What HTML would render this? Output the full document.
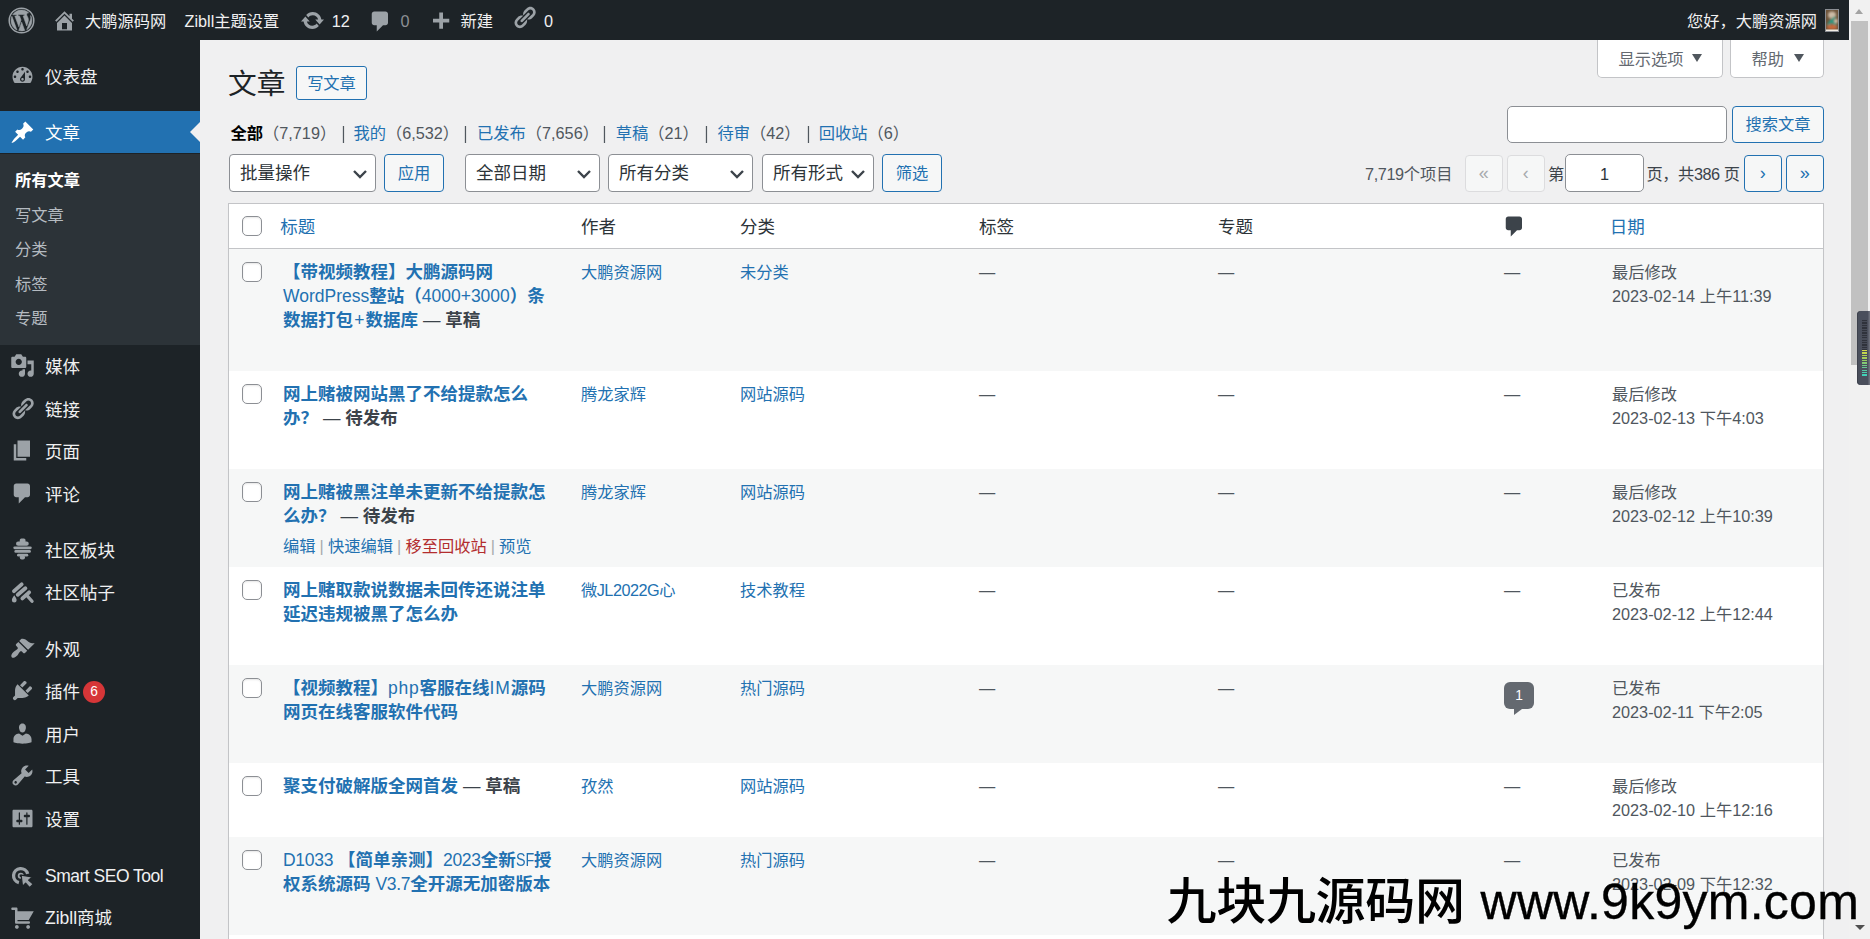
<!DOCTYPE html>
<html lang="zh-CN">
<head>
<meta charset="utf-8">
<title>文章 ‹ 大鹏源码网 — WordPress</title>
<style>
*{box-sizing:border-box;margin:0;padding:0}
html,body{width:1870px;height:939px;overflow:hidden}
body{background:#f0f0f1;color:#3c434a;font-family:"Liberation Sans","Noto Sans CJK SC",sans-serif;font-size:16.25px;line-height:1.4;position:relative}
a{color:#2271b1;text-decoration:none}
svg{display:block}
/* admin bar */
#bar{position:absolute;left:0;top:0;width:1849px;height:40px;background:#1d2327;color:#f0f0f1;z-index:20}
#bar .it{position:absolute;top:0;height:43px;line-height:43px;font-size:16.25px;white-space:nowrap;color:#f0f0f1}
#bar svg{position:absolute;fill:#9ca2a7}
#bar .dim{color:#8c8f94}
/* side menu */
#side{position:absolute;left:0;top:40px;width:200px;height:899px;background:#1d2327;z-index:10}
#side .mi{position:absolute;left:0;width:200px;height:42.5px;color:#f0f0f1;font-size:17.5px;line-height:44px;padding-left:45px;white-space:nowrap}
#side .mi svg{position:absolute;left:10px;top:8.300px;width:25px;height:25px;fill:#9ca2a7}
#side .cur{background:#2271b1;color:#fff}
#side .cur svg{fill:#fff;top:8.500px}
#side .cur:after{content:"";position:absolute;right:0;top:11px;border:10px solid transparent;border-right-color:#f0f0f1}
#sub{position:absolute;left:0;top:113.75px;width:200px;height:191px;background:#2c3338}
#sub div{position:absolute;left:15px;font-size:16.25px;line-height:23px;color:#b5bbc1;white-space:nowrap}
#sub .on{color:#fff;font-weight:700}
.badge{display:inline-block;background:#d63638;color:#fff;font-size:13.75px;line-height:21px;height:22px;min-width:22px;border-radius:11px;text-align:center;vertical-align:top;margin:11px 0 0 3px;padding:0 6px}
/* content */
#main{position:absolute;left:200px;top:40px;width:1649px;height:899px;overflow:hidden}
.abs{position:absolute;white-space:nowrap}
.tab{position:absolute;top:0;height:36px;background:#fff;border:1px solid #c3c4c7;border-top:none;border-radius:0 0 5px 5px;color:#646970;font-size:16.25px;line-height:39px;padding:0 0 0 20.500px;white-space:nowrap}
.tab:after{content:"";position:absolute;right:19.500px;top:13.500px;border:5.500px solid transparent;border-top:8px solid #50575e;border-bottom:none}
.btn{position:absolute;border:1px solid #2271b1;border-radius:4px;background:#f6f7f7;color:#2271b1;font-size:16.25px;text-align:center;white-space:nowrap}
.btn.dis{border-color:#dcdcde;color:#a7aaad;background:#f6f7f7}
.sel{position:absolute;border:1px solid #8c8f94;border-radius:4px;background:#fff;color:#2c3338;font-size:17.5px;padding-left:10px;white-space:nowrap}
.sel svg{position:absolute;right:5.500px;top:12px;width:20px;height:14px;fill:none;stroke:#3c434a;stroke-width:2.4}
.inp{position:absolute;border:1px solid #8c8f94;border-radius:5px;background:#fff}
/* table */
#tbl{position:absolute;left:28px;top:163px;width:1596px;border:1px solid #c3c4c7;background:#fff;box-shadow:0 1px 1px rgba(0,0,0,.04)}
#thead{position:relative;height:45px;border-bottom:1px solid #c3c4c7;font-size:17.5px;line-height:46.6px;color:#2c3338}
.row{position:relative;background:#fff;font-size:16.25px;line-height:24px;color:#50575e}
.row.alt{background:#f6f7f7}
.cb{position:absolute;left:13px;width:20px;height:20px;border:1px solid #8c8f94;border-radius:5px;background:#fff;box-shadow:inset 0 1px 2px rgba(0,0,0,.1)}
.c{position:absolute;white-space:nowrap}
.t{position:absolute;left:54px;top:11.4px;width:280px;font-size:17.5px;font-weight:700;color:#2271b1;line-height:24px;white-space:nowrap}
.t i{font-style:normal;font-weight:400}
.t b{color:#3c434a;font-weight:700}
.t b i{font-weight:400}
.ra{position:absolute;left:54px;font-size:16.25px;color:#a7aaad;white-space:nowrap;word-spacing:-.4px}
.ra .del{color:#b32d2e}
#wm{position:absolute;left:1166.500px;top:869.300px;font-size:50px;line-height:66px;font-weight:500;color:#000;white-space:nowrap;z-index:50;font-family:"Liberation Sans","Noto Sans CJK SC",sans-serif}

.ss{top:81.200px;line-height:24px;color:#50575e}
.ss b{color:#000;font-weight:700}
.ss.bar{color:#50575e;font-size:19px;top:80.600px;transform:scaleX(.8);margin-left:-.9px}
.pg{top:115px;width:37.500px;height:37px;line-height:35px;font-size:18px}
.d{top:11.300px;line-height:24px}
.bub{position:absolute;top:17px;width:30px;height:27px;border-radius:6px;background:#646970;color:#fff;font-size:13.75px;line-height:28px;text-align:center}
.bub:after{content:"";position:absolute;left:9.500px;top:27px;width:0;height:0;border-top:6px solid #646970;border-right:8px solid transparent}
/* scrollbar */
#sb{position:absolute;left:1849px;top:0;width:21px;height:939px;background:#f1f1f1;z-index:30}
#sb .th{position:absolute;left:2px;top:21px;width:17px;height:344px;background:#c1c1c1}
#sb .up{position:absolute;left:6px;top:9px;border:4.5px solid transparent;border-bottom:5px solid #a3a3a3;border-top:none}
#sb .dn{position:absolute;left:5.500px;top:924.500px;border:5px solid transparent;border-top:5.500px solid #505050;border-bottom:none}
#sb .wg{position:absolute;left:8px;top:311px;width:13px;height:74px;background:#4a4f5c;border-radius:4px 0 0 4px;box-shadow:inset -1.500px 0 0 #6d717c,inset 1px 0 0 #3d414c}
#sb .wg i{position:absolute;left:5px;width:5px}
#sb .wg .k{top:8.500px;height:30px;background:repeating-linear-gradient(180deg,#2f323b 0,#2f323b 1.300px,#474b57 1.300px,#474b57 2.450px)}
#sb .wg .g{top:38.700px;height:27px;background:repeating-linear-gradient(180deg,transparent 0,transparent 1.350px,#4a4f5c 1.350px,#4a4f5c 2.450px),linear-gradient(180deg,#d4dc48 0%,#9ccc5c 35%,#5cc89c 70%,#38d4c0 100%)}
</style>
</head>
<body>
<div id="bar">
<svg viewBox="0 0 27 27" width="27" height="27" style="left:7.770px;top:7px;fill:#9ca2a7"><circle cx="13.500" cy="13.500" r="12.300" fill="none" stroke="#9ca2a7" stroke-width="1.500"/><g transform="translate(13.500 13.500) scale(1.175) translate(-10 -10)" stroke="#9ca2a7" stroke-width=".5" stroke-linejoin="round"><path d="M7.78 15.37L4.37 6.22c.55-.02 1.17-.08 1.17-.08.5-.06.44-1.13-.06-1.11 0 0-1.45.11-2.37.11-.18 0-.37 0-.58-.01C4.12 2.69 6.87 1.11 10 1.11c2.33 0 4.45.87 6.05 2.34-.68-.11-1.65.39-1.65 1.58 0 .74.45 1.36.9 2.1.35.61.55 1.36.55 2.46 0 1.49-1.4 5-1.4 5l-3.03-8.37c.54-.02.82-.17.82-.17.5-.05.44-1.25-.06-1.22 0 0-1.44.12-2.38.12-.87 0-2.33-.12-2.33-.12-.5-.03-.56 1.2-.06 1.22l.92.08 1.26 3.41zM17.41 10c.24-.64.74-1.87.43-4.25.7 1.29 1.05 2.71 1.05 4.25 0 3.29-1.73 6.24-4.4 7.78.97-2.59 1.94-5.2 2.92-7.78zM6.1 18.09C3.12 16.65 1.11 13.53 1.11 10c0-1.3.23-2.48.72-3.59C3.25 10.3 4.67 14.2 6.1 18.09zM10.13 11.46l2.58 6.98c-.86.29-1.76.45-2.71.45-.79 0-1.57-.11-2.29-.33.81-2.38 1.62-4.74 2.42-7.1z"/></g></svg>
<svg viewBox="0 0 20 20" width="25" height="25" style="left:52px;top:8px"><path d="M16 8.5l1.53 1.53-1.06 1.06L10 4.62l-6.47 6.47-1.06-1.06L10 2.5l4 4v-2h2v4zm-6-2.46l6 5.99V18H4v-5.97zM12 17v-5H8v5h4z"/></svg>
<div class="it" style="left:85px">大鹏源码网</div>
<div class="it" style="left:184.5px">Zibll主题设置</div>
<svg viewBox="0 0 20 20" width="25" height="25" style="left:299.5px;top:8px"><path d="M10.2 3.28c3.53 0 6.43 2.61 6.92 6h2.08l-3.5 4-3.5-4h2.32c-.45-1.97-2.21-3.45-4.32-3.45-1.45 0-2.73.71-3.54 1.78L4.95 5.66C6.23 4.2 8.11 3.28 10.2 3.28zm-.4 13.44c-3.52 0-6.43-2.61-6.92-6H.8l3.5-4c1.17 1.33 2.33 2.67 3.5 4H5.48c.45 1.97 2.21 3.45 4.32 3.45 1.45 0 2.73-.71 3.54-1.78l1.71 1.95c-1.28 1.46-3.15 2.38-5.25 2.38z"/></svg>
<div class="it" style="left:331.700px">12</div>
<svg viewBox="0 0 20 20" width="25" height="25" style="left:367.7px;top:8.7px"><path d="M5 2h9c1.1 0 2 .9 2 2v7c0 1.1-.9 2-2 2h-2l-5 5v-5H5c-1.1 0-2-.9-2-2V4c0-1.1.9-2 2-2z"/></svg>
<div class="it dim" style="left:400.5px">0</div>
<svg viewBox="0 0 20 20" width="25" height="25" style="left:428.200px;top:9.600px"><path d="M17 7v3h-5v5H9v-5H4V7h5V2h3v5h5z"/></svg>
<div class="it" style="left:460.5px">新建</div>
<svg viewBox="0 0 20 20" width="25" height="25" style="left:511.6px;top:4.8px"><path d="M17.74 2.76c1.68 1.69 1.68 4.41 0 6.1l-1.53 1.52c-1.12 1.12-2.7 1.47-4.14 1.09l2.62-2.61.76-.77.76-.76c.84-.84.84-2.2 0-3.04-.84-.85-2.2-.85-3.04 0l-.77.76-3.38 3.38c-.37-1.44-.02-3.02 1.1-4.14l1.52-1.53c1.69-1.68 4.42-1.68 6.1 0zM8.59 13.43l5.34-5.34c.42-.42.42-1.1 0-1.52-.44-.43-1.13-.39-1.53 0l-5.33 5.34c-.42.42-.42 1.1 0 1.52.44.43 1.13.39 1.52 0zm-.76 2.29l4.14-4.15c.38 1.44.03 3.02-1.09 4.14l-1.52 1.53c-1.69 1.68-4.41 1.68-6.1 0-1.68-1.68-1.68-4.42 0-6.1l1.53-1.52c1.12-1.12 2.7-1.47 4.14-1.1l-4.14 4.15c-.85.84-.85 2.2 0 3.05.84.84 2.2.84 3.04 0z"/></svg>
<div class="it" style="left:544px">0</div>
<div class="it" style="right:32px">您好，大鹏资源网</div>
<svg viewBox="0 0 14 23" width="14" height="23" style="left:1825px;top:9px;fill:none"><defs><filter id="bl" x="-20%" y="-20%" width="140%" height="140%"><feGaussianBlur stdDeviation="1"/></filter><clipPath id="cp"><rect x="1" y="1" width="12" height="21"/></clipPath></defs><rect width="14" height="23" fill="#8c8f94"/><g clip-path="url(#cp)"><rect x="1" y="1" width="12" height="21" fill="#6e553c"/><g filter="url(#bl)"><ellipse cx="7" cy="6" rx="4" ry="3.500" fill="#cdbba6"/><path d="M3 16L10 8M5 11L11 16" stroke="#2f9a84" stroke-width="2.600"/><ellipse cx="7" cy="18" rx="5" ry="2.500" fill="#c8683a"/><ellipse cx="11" cy="12" rx="1.500" ry="2" fill="#e8d8c4"/></g><rect x="1" y="20.500" width="12" height="1.500" fill="#f2ede4"/></g></svg>
</div>
<div id="side">
<div class="mi" style="top:15px"><svg viewBox="0 0 20 20"><path d="M3.76 16h12.48c1.1-1.37 1.76-3.11 1.76-5 0-4.42-3.58-8-8-8s-8 3.58-8 8c0 1.89.66 3.63 1.76 5zM10 4c.55 0 1 .45 1 1s-.45 1-1 1-1-.45-1-1 .45-1 1-1zM6 6c.55 0 1 .45 1 1s-.45 1-1 1-1-.45-1-1 .45-1 1-1zm8 0c.55 0 1 .45 1 1s-.45 1-1 1-1-.45-1-1 .45-1 1-1zm-5.370 5.550L12 7v6c0 1.100-.9 2-2 2s-2-.9-2-2c0-.570.240-1.080.630-1.450zM4 10c.55 0 1 .45 1 1s-.45 1-1 1-1-.45-1-1 .45-1 1-1zm12 0c.55 0 1 .45 1 1s-.45 1-1 1-1-.45-1-1 .45-1 1-1zm-5 3c0-.55-.45-1-1-1s-1 .45-1 1 .45 1 1 1 1-.45 1-1z"/></svg>仪表盘</div>
<div class="mi cur" style="top:71px;height:42px;line-height:44px"><svg viewBox="0 0 20 20"><path d="M10.44 3.02l1.82-1.82 6.36 6.35-1.830 1.820c-1.050-.68-2.480-.57-3.410.36l-.75.75c-.92.93-1.040 2.350-.35 3.410l-1.830 1.820-2.410-2.410-2.800 2.790c-.42.42-3.380 2.710-3.800 2.290s1.860-3.390 2.280-3.810l2.790-2.790L4.100 9.360l1.830-1.820c1.050.69 2.480.57 3.400-.36l.75-.75c.93-.92 1.050-2.350.36-3.410z"/></svg>文章</div>
<div class="mi" style="top:305px"><svg viewBox="0 0 20 20"><path d="M13 11V4c0-.55-.45-1-1-1h-1.670L9 1H5L3.670 3H2c-.55 0-1 .45-1 1v7c0 .55.45 1 1 1h10c.55 0 1-.45 1-1zM7 4.500c1.380 0 2.500 1.120 2.500 2.500S8.380 9.500 7 9.500 4.500 8.380 4.500 7 5.620 4.500 7 4.500zM14 6h5v10.500c0 1.380-1.120 2.500-2.500 2.500S14 17.880 14 16.500s1.120-2.500 2.500-2.500c.17 0 .34.020.5.050V9h-3V6zm-4 8.050V13h2v3.500c0 1.380-1.120 2.500-2.500 2.500S7 17.880 7 16.500 8.120 14 9.500 14c.17 0 .34.020.5.050z"/></svg>媒体</div>
<div class="mi" style="top:347.5px"><svg viewBox="0 0 20 20"><path d="M17.74 2.76c1.68 1.69 1.68 4.41 0 6.1l-1.53 1.52c-1.12 1.12-2.7 1.47-4.14 1.09l2.62-2.61.76-.77.76-.76c.84-.84.84-2.2 0-3.04-.84-.85-2.2-.85-3.04 0l-.77.76-3.38 3.38c-.37-1.44-.02-3.02 1.1-4.14l1.52-1.53c1.69-1.68 4.42-1.68 6.1 0zM8.59 13.43l5.34-5.34c.42-.42.42-1.1 0-1.52-.44-.43-1.13-.39-1.53 0l-5.33 5.34c-.42.42-.42 1.1 0 1.52.44.43 1.13.39 1.52 0zm-.76 2.29l4.14-4.15c.38 1.44.03 3.02-1.09 4.14l-1.52 1.53c-1.69 1.68-4.41 1.68-6.1 0-1.68-1.68-1.68-4.42 0-6.1l1.53-1.52c1.12-1.12 2.7-1.47 4.14-1.1l-4.14 4.15c-.85.84-.85 2.2 0 3.05.84.84 2.2.84 3.04 0z"/></svg>链接</div>
<div class="mi" style="top:390px"><svg viewBox="0 0 20 20"><path d="M6 15V2h10v13H6zm-1 1h8v2H3V5h2v11z"/></svg>页面</div>
<div class="mi" style="top:432.5px"><svg viewBox="0 0 20 20"><path d="M5 2h9c1.1 0 2 .9 2 2v7c0 1.1-.9 2-2 2h-2l-5 5v-5H5c-1.1 0-2-.9-2-2V4c0-1.1.9-2 2-2z"/></svg>评论</div>
<div class="mi" style="top:488.75px"><svg viewBox="0 0 20 20" style="top:7.500px"><rect x="7.8" y="1.9" width="4.6" height="4" rx="1.3"/><rect x="4.8" y="4.4" width="10.2" height="3.4" rx="1.7"/><rect x="2.65" y="8.3" width="14.75" height="2.3" rx="1.15"/><rect x="3.5" y="11.25" width="13.2" height="2.15" rx="1.07"/><rect x="5.6" y="14.2" width="9" height="2.2" rx="1.1"/><rect x="7.8" y="15.3" width="4.2" height="3.45" rx="1.6"/></svg>社区板块</div>
<div class="mi" style="top:531.25px"><svg viewBox="0 0 20 20" style="top:8.500px"><g fill="none" stroke="#9ca2a7" stroke-linecap="round"><path stroke-width="3.100" d="M3.200 8.900l6.100-5.400M6.200 11.800l6.100-5.200M9.900 14.700l5.400-4.800"/><path stroke-width="2.700" d="M13.200 12l4.400 5"/></g><path d="M3.400 12.200c1.200 1.600 1.900 2.900 1.900 3.900a1.900 1.900 0 0 1-3.800 0c0-1 .7-2.300 1.900-3.900z"/></svg>社区帖子</div>
<div class="mi" style="top:587.5px"><svg viewBox="0 0 20 20"><path d="M14.48 11.06L7.41 3.99l1.5-1.5c.5-.56 2.3-.47 3.51.32 1.21.8 1.43 1.28 2.91 2.1 1.18.64 2.45 1.26 4.45.85zm-.71.71L6.7 4.7 4.93 6.47c-.39.39-.39 1.02 0 1.41l1.060 1.060c.39.39.39 1.030 0 1.420-.6.6-1.430 1.110-2.210 1.690-.35.26-.7.53-1.010.84C1.430 14.230.4 16.080 1.400 17.070c.99 1 2.840-.03 4.180-1.360.31-.31.58-.66.85-1.010.57-.78 1.080-1.610 1.690-2.210.39-.39 1.020-.39 1.410 0l1.060 1.060c.39.39 1.020.39 1.410 0z"/></svg>外观</div>
<div class="mi" style="top:630px"><svg viewBox="0 0 20 20"><path d="M13.11 4.36L9.87 7.6 8 5.73l3.240-3.240c.35-.34 1.050-.2 1.560.32.52.51.66 1.210.31 1.550zm-8 1.770l.91-1.120 9.010 9.010-1.190.84c-.71.71-2.630 1.160-3.820 1.160H6.140L4.900 17.260c-.59.59-1.540.59-2.120 0-.59-.58-.59-1.530 0-2.120l1.240-1.240v-3.880c0-1.130.4-3.190 1.090-3.890zm7.260 3.970l3.240-3.240c.34-.35 1.040-.21 1.550.31.52.51.66 1.210.31 1.550l-3.240 3.250z"/></svg>插件<span class="badge">6</span></div>
<div class="mi" style="top:672.5px"><svg viewBox="0 0 20 20"><path d="M10 9.250c-2.270 0-2.730-3.440-2.730-3.440C7 4.020 7.820 2 9.970 2c2.160 0 2.980 2.020 2.710 3.810 0 0-.41 3.440-2.680 3.440zm0 2.570L12.720 10c2.390 0 4.520 2.330 4.520 4.530v2.490s-3.650 1.130-7.240 1.130c-3.650 0-7.240-1.130-7.240-1.130v-2.490c0-2.250 1.940-4.480 4.470-4.480z"/></svg>用户</div>
<div class="mi" style="top:715px"><svg viewBox="0 0 20 20"><path d="M16.68 9.77c-1.34 1.34-3.3 1.67-4.95.99l-5.410 6.520c-.99.99-2.590.99-3.580 0s-.99-2.590 0-3.570l6.520-5.420c-.68-1.650-.35-3.610.99-4.950 1.280-1.280 3.120-1.620 4.720-1.060l-2.890 2.890 2.820 2.820 2.860-2.860c.53 1.580.18 3.390-1.080 4.640zM3.810 16.210c.4.39 1.040.39 1.430 0 .4-.4.4-1.040 0-1.430-.39-.4-1.030-.4-1.430 0-.39.39-.39 1.030 0 1.430z"/></svg>工具</div>
<div class="mi" style="top:757.5px"><svg viewBox="0 0 20 20"><path d="M18 16V4c0-.55-.45-1-1-1H3c-.55 0-1 .45-1 1v12c0 .55.45 1 1 1h14c.55 0 1-.45 1-1zM8 11h1c.55 0 1 .45 1 1s-.45 1-1 1H8v1.500c0 .28-.22.5-.5.5s-.5-.22-.5-.5V13H6c-.55 0-1-.45-1-1s.45-1 1-1h1V5.500c0-.28.22-.5.5-.5s.5.22.5.5V11zm5-2h-1c-.55 0-1-.45-1-1s.45-1 1-1h1V5.500c0-.28.22-.5.5-.5s.5.22.5.5V7h1c.55 0 1 .45 1 1s-.45 1-1 1h-1v5.500c0 .28-.22.5-.5.5s-.5-.22-.5-.5V9z"/></svg>设置</div>
<div class="mi" style="top:813.75px"><svg viewBox="0 0 20 21" style="height:26.250px;top:7.900px"><path fill="none" stroke="#9ca2a7" stroke-width="2.640" d="M14.150 9.510A5.750 5.750 0 1 0 7.110 16.550"/><circle cx="8.600" cy="11" r="1.700" fill="none" stroke="#9ca2a7" stroke-width="1.400"/><path stroke="#1d2327" stroke-width="1" stroke-linejoin="round" d="M8.900 10.500L17.800 11.900 14.900 14.500 18.500 17.700 15.700 20.500 12.500 16.900 10 19.600z"/></svg><span style="letter-spacing:-.5px">Smart SEO Tool</span></div>
<div class="mi" style="top:856.25px"><svg viewBox="0 0 20 20"><path d="M6 13h9c.55 0 1 .45 1 1s-.45 1-1 1H5c-.55 0-1-.45-1-1V4H2c-.55 0-1-.45-1-1s.45-1 1-1h3c.55 0 1 .45 1 1v2h13l-4 7H6v1zm-.5 3c.83 0 1.500.67 1.500 1.500S6.330 19 5.500 19 4 18.330 4 17.500 4.670 16 5.500 16zm9 0c.83 0 1.500.67 1.500 1.500s-.67 1.500-1.500 1.500-1.500-.67-1.500-1.500.67-1.500 1.500-1.500z"/></svg>Zibll商城</div>
<div id="sub"><div class=on style="top:15px">所有文章</div><div style="top:50.200px">写文章</div><div style="top:84.700px">分类</div><div style="top:119.200px">标签</div><div style="top:153.700px">专题</div></div>
</div>
<div id="main">
<div class="tab" style="left:1397px;width:125.5px;height:37.5px">显示选项</div>
<div class="tab" style="left:1530px;width:94px;height:37.5px">帮助</div>
<div class="abs" style="left:28px;top:24px;font-size:28.75px;line-height:40px;color:#1d2327">文章</div>
<div class="btn" style="left:96px;top:26px;width:71px;height:34px;line-height:32px;border-radius:3px">写文章</div>
<div class="abs ss" style="left:30.5px"><b>全部</b><span>（7,719）</span></div>
<div class="abs ss" style="left:153.39999999999998px"><a>我的</a><span>（6,532）</span></div>
<div class="abs ss" style="left:277px"><a>已发布</a><span>（7,656）</span></div>
<div class="abs ss" style="left:415.70000000000005px"><a>草稿</a><span>（21）</span></div>
<div class="abs ss" style="left:517.4px"><a>待审</a><span>（42）</span></div>
<div class="abs ss" style="left:618.7px"><a>回收站</a><span>（6）</span></div>
<div class="abs ss bar" style="left:141.5px">|</div>
<div class="abs ss bar" style="left:264px">|</div>
<div class="abs ss bar" style="left:402.6px">|</div>
<div class="abs ss bar" style="left:504.70000000000005px">|</div>
<div class="abs ss bar" style="left:606.8px">|</div>
<div class="inp" style="left:1307px;top:66px;width:220px;height:37px"></div>
<div class="btn" style="left:1532px;top:66px;width:92px;height:37px;line-height:35px">搜索文章</div>
<div class="sel" style="left:29px;top:114px;width:147px;height:38px;line-height:37.600px">批量操作<svg viewBox="0 0 20 14"><path d="M4 4l6 6 6-6"/></svg></div>
<div class="btn" style="left:184px;top:114px;width:60px;height:38px;line-height:37.600px">应用</div>
<div class="sel" style="left:265px;top:114px;width:135px;height:38px;line-height:37.600px">全部日期<svg viewBox="0 0 20 14"><path d="M4 4l6 6 6-6"/></svg></div>
<div class="sel" style="left:408px;top:114px;width:145px;height:38px;line-height:37.600px">所有分类<svg viewBox="0 0 20 14"><path d="M4 4l6 6 6-6"/></svg></div>
<div class="sel" style="left:562px;top:114px;width:112px;height:38px;line-height:37.600px">所有形式<svg viewBox="0 0 20 14"><path d="M4 4l6 6 6-6"/></svg></div>
<div class="btn" style="left:682px;top:114px;width:60px;height:38px;line-height:37.600px">筛选</div>
<div class="abs" style="left:1165px;top:122px;line-height:24px;color:#50575e"><span style="letter-spacing:-.4px">7,719</span>个项目</div>
<div class="btn dis pg" style="left:1265px">«</div>
<div class="btn dis pg" style="left:1307px">‹</div>
<div class="abs" style="left:1348px;top:122px;line-height:24px">第</div>
<div class="inp" style="left:1365px;top:114px;width:79px;height:38px;text-align:center;line-height:36px;color:#2c3338;font-size:16.250px;border-radius:5px;line-height:38px">1</div>
<div class="abs" style="left:1446.500px;top:122px;line-height:24px;letter-spacing:-.45px">页，共386 页</div>
<div class="btn pg" style="left:1544px">›</div>
<div class="btn pg" style="left:1586px">»</div>
<div id="tbl"><div id="thead"><div class="cb" style="top:12px"></div><a class="c" style="left:51.300px">标题</a><span class="c" style="left:352px">作者</span><span class="c" style="left:511px">分类</span><span class="c" style="left:750px">标签</span><span class="c" style="left:989px">专题</span><svg viewBox="0 0 20 20" width="25" height="25" style="position:absolute;left:1273px;top:9.500px;fill:#3c434a"><path d="M5 2h9c1.1 0 2 .9 2 2v7c0 1.1-.9 2-2 2h-2l-5 5v-5H5c-1.1 0-2-.9-2-2V4c0-1.1.9-2 2-2z"/></svg><a class="c" style="left:1380.700px">日期</a></div>
<div class="row alt" style="height:122px"><div class="cb" style="top:13px"></div><div class="t">【带视频教程】大鹏源码网<br><i>WordPress</i>整站（<i>4000+3000</i>）条<br>数据打包<i style="margin:0 1.200px">+</i>数据库<b> <i>—</i> 草稿</b></div><a class="c d" style="left:352px">大鹏资源网</a><a class="c d" style="left:511px">未分类</a><span class="c d" style="left:750px">—</span><span class="c d" style="left:989px">—</span><span class="c d" style="left:1275px">—</span><span class="c d" style="left:1383px">最后修改<br>2023-02-14 上午11:39</span></div>
<div class="row" style="height:98px"><div class="cb" style="top:13px"></div><div class="t">网上赌被网站黑了不给提款怎么<br>办？<b> <i>—</i> 待发布</b></div><a class="c d" style="left:352px">腾龙家辉</a><a class="c d" style="left:511px">网站源码</a><span class="c d" style="left:750px">—</span><span class="c d" style="left:989px">—</span><span class="c d" style="left:1275px">—</span><span class="c d" style="left:1383px">最后修改<br>2023-02-13 下午4:03</span></div>
<div class="row alt" style="height:98px"><div class="cb" style="top:13px"></div><div class="t">网上赌被黑注单未更新不给提款怎<br>么办？<b> <i>—</i> 待发布</b></div><div class="ra" style="top:65px"><a>编辑</a> | <a>快速编辑</a> | <a class="del">移至回收站</a> | <a>预览</a></div><a class="c d" style="left:352px">腾龙家辉</a><a class="c d" style="left:511px">网站源码</a><span class="c d" style="left:750px">—</span><span class="c d" style="left:989px">—</span><span class="c d" style="left:1275px">—</span><span class="c d" style="left:1383px">最后修改<br>2023-02-12 上午10:39</span></div>
<div class="row" style="height:98px"><div class="cb" style="top:13px"></div><div class="t">网上赌取款说数据未回传还说注单<br>延迟违规被黑了怎么办</div><a class="c d" style="left:352px;letter-spacing:-.5px">微JL2022G心</a><a class="c d" style="left:511px">技术教程</a><span class="c d" style="left:750px">—</span><span class="c d" style="left:989px">—</span><span class="c d" style="left:1275px">—</span><span class="c d" style="left:1383px">已发布<br>2023-02-12 上午12:44</span></div>
<div class="row alt" style="height:98px"><div class="cb" style="top:13px"></div><div class="t">【视频教程】<i style="letter-spacing:.8px">php</i>客服在线<i style="letter-spacing:.8px">IM</i>源码<br>网页在线客服软件代码</div><a class="c d" style="left:352px">大鹏资源网</a><a class="c d" style="left:511px">热门源码</a><span class="c d" style="left:750px">—</span><span class="c d" style="left:989px">—</span><span class="bub" style="left:1275px">1</span><span class="c d" style="left:1383px">已发布<br>2023-02-11 下午2:05</span></div>
<div class="row" style="height:74px"><div class="cb" style="top:13px"></div><div class="t">聚支付破解版全网首发<b> <i>—</i> 草稿</b></div><a class="c d" style="left:352px">孜然</a><a class="c d" style="left:511px">网站源码</a><span class="c d" style="left:750px">—</span><span class="c d" style="left:989px">—</span><span class="c d" style="left:1275px">—</span><span class="c d" style="left:1383px">最后修改<br>2023-02-10 上午12:16</span></div>
<div class="row alt" style="height:98px"><div class="cb" style="top:13px"></div><div class="t"><i style="letter-spacing:-.3px">D1033</i> 【简单亲测】<i style="letter-spacing:-.3px">2023</i>全新<i style="display:inline-block;transform:scaleX(.82);transform-origin:0 50%;margin-right:-4.200px">SF</i>授<br>权系统源码 <i style="letter-spacing:-.3px">V3.7</i>全开源无加密版本</div><a class="c d" style="left:352px">大鹏资源网</a><a class="c d" style="left:511px">热门源码</a><span class="c d" style="left:750px">—</span><span class="c d" style="left:989px">—</span><span class="c d" style="left:1275px">—</span><span class="c d" style="left:1383px">已发布<br>2023-02-09 下午12:32</span></div>
<div class="row" style="height:98px"></div></div>
</div>
<div id="sb"><div class="up"></div><div class="th"></div><div class="dn"></div><div class="wg"><i class="k"></i><i class="g"></i></div></div>
<div id="wm"><span style="letter-spacing:-.3px">九块九源码网</span> <span style="margin-left:2px;letter-spacing:.26px;-webkit-text-stroke:.35px #000">www.9k9ym.com</span></div>
</body>
</html>
